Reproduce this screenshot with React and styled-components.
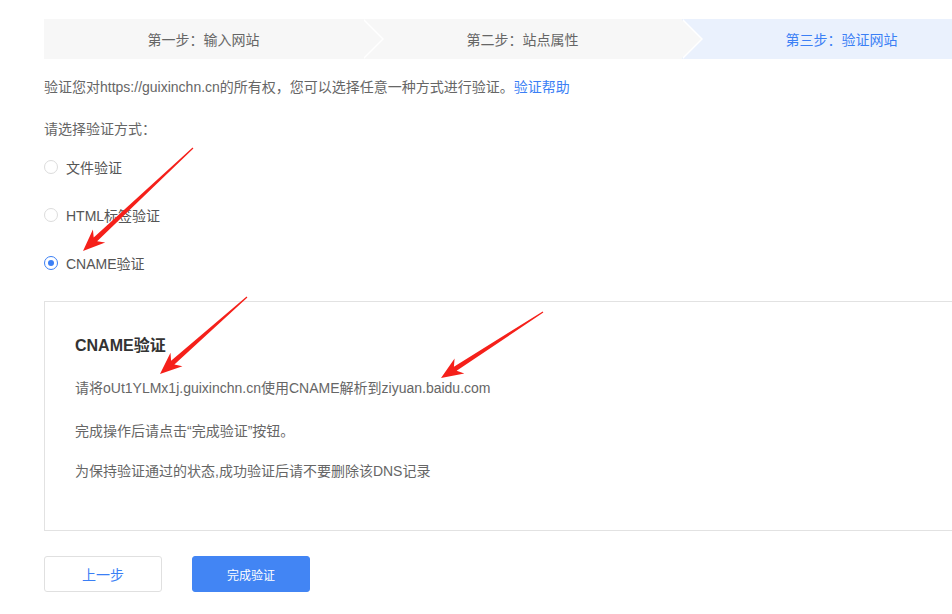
import React from 'react';
import styled, { createGlobalStyle } from 'styled-components';

const GlobalStyle = createGlobalStyle`
  html, body {
    margin: 0;
    padding: 0;
    background: #fff;
    overflow: hidden;
  }
  body {
    font-family: "Liberation Sans", "Noto Sans CJK SC", sans-serif;
    color: #666;
  }
`;

const Page = styled.div`
  position: relative;
  width: 1000px;
  padding: 19px 0 0 44px;
`;

const StepBar = styled.div`
  display: flex;
  height: 40px;
`;

const Step = styled.div`
  position: relative;
  flex: 0 0 319px;
  display: flex;
  align-items: center;
  justify-content: center;
  font-size: 14px;
  background: ${({ active }) => (active ? '#eaf1fd' : '#f7f7f7')};
  color: ${({ active }) => (active ? '#3b7ff5' : '#666')};
  z-index: ${({ layer }) => layer};

  ${({ last }) =>
    !last &&
    `
    &::before, &::after {
      content: '';
      position: absolute;
      top: 0;
      width: 0;
      height: 0;
      border-top: 20px solid transparent;
      border-bottom: 20px solid transparent;
    }
    &::before {
      right: -21px;
      border-left: 20px solid #fff;
    }
    &::after {
      right: -19px;
      border-left: 20px solid #f7f7f7;
    }
  `}
`;

const Intro = styled.p`
  margin: 18px 0 0;
  font-size: 14px;
  line-height: 20px;
`;

const HelpLink = styled.a`
  color: #3b7ff5;
  text-decoration: none;
`;

const Label = styled.p`
  margin: 22px 0 0;
  font-size: 14px;
  line-height: 20px;
`;

const RadioList = styled.div`
  display: flex;
  flex-direction: column;
  gap: 28px;
  margin-top: 18px;
`;

const RadioRow = styled.label`
  display: flex;
  align-items: center;
  gap: 8px;
  height: 20px;
  font-size: 14px;
  color: #555;
`;

const RadioDot = styled.span`
  box-sizing: border-box;
  width: 14px;
  height: 14px;
  border-radius: 50%;
  border: 1px solid ${({ checked }) => (checked ? '#3b7ff5' : '#dcdcdc')};
  display: flex;
  align-items: center;
  justify-content: center;

  &::after {
    content: '';
    width: 6px;
    height: 6px;
    border-radius: 50%;
    background: ${({ checked }) => (checked ? '#3b7ff5' : 'transparent')};
  }
`;

const InfoBox = styled.div`
  margin-top: 28px;
  width: 940px;
  border: 1px solid #e2e2e2;
  padding: 32px 30px 49px;
  box-sizing: border-box;
`;

const BoxTitle = styled.h3`
  margin: 0;
  font-size: 16px;
  line-height: 24px;
  font-weight: bold;
  color: #333;
`;

const BoxLine = styled.p`
  margin: ${({ gap }) => gap}px 0 0;
  font-size: 14px;
  line-height: 20px;
  color: #666;
`;

const Buttons = styled.div`
  display: flex;
  gap: 30px;
  margin-top: 25px;
`;

const Button = styled.button`
  box-sizing: border-box;
  width: 118px;
  height: 36px;
  border-radius: 3px;
  font-family: inherit;
  font-size: ${({ size }) => size}px;
  cursor: pointer;
  border: 1px solid ${({ primary }) => (primary ? '#4285f4' : '#e0e0e0')};
  background: ${({ primary }) => (primary ? '#4285f4' : '#fff')};
  color: ${({ primary }) => (primary ? '#fff' : '#3b7ff5')};
`;

const Overlay = styled.svg`
  position: absolute;
  left: 0;
  top: 0;
  width: 952px;
  height: 614px;
  pointer-events: none;
`;

const arrows = [
  { tail: [193, 148], tip: [83, 251] },
  { tail: [247, 297], tip: [160, 374] },
  { tail: [543, 312], tip: [441, 378] },
];

function arrowPoints({ tail, tip }) {
  const dx = tip[0] - tail[0];
  const dy = tip[1] - tail[1];
  const len = Math.hypot(dx, dy);
  const ux = dx / len;
  const uy = dy / len;
  const nx = -uy;
  const ny = ux;
  const headLen = 22;
  const headW = 9;
  const neckW = 2.5;
  const bx = tip[0] - ux * headLen;
  const by = tip[1] - uy * headLen;
  const nbx = tip[0] - ux * (headLen - 5);
  const nby = tip[1] - uy * (headLen - 5);
  const pts = [
    [tail[0] + nx * 0.6, tail[1] + ny * 0.6],
    [nbx + nx * neckW, nby + ny * neckW],
    [bx + nx * headW, by + ny * headW],
    tip,
    [bx - nx * headW, by - ny * headW],
    [nbx - nx * neckW, nby - ny * neckW],
    [tail[0] - nx * 0.6, tail[1] - ny * 0.6],
  ];
  return pts.map((p) => p.join(',')).join(' ');
}

const steps = ['第一步：输入网站', '第二步：站点属性', '第三步：验证网站'];

export default function App() {
  return (
    <>
      <GlobalStyle />
      <Page>
        <StepBar>
          {steps.map((s, i) => (
            <Step key={s} active={i === 2} last={i === 2} layer={3 - i}>
              {s}
            </Step>
          ))}
        </StepBar>

        <Intro>
          验证您对https://guixinchn.cn的所有权，您可以选择任意一种方式进行验证。
          <HelpLink href="#">验证帮助</HelpLink>
        </Intro>

        <Label>请选择验证方式：</Label>

        <RadioList>
          <RadioRow>
            <RadioDot />
            文件验证
          </RadioRow>
          <RadioRow>
            <RadioDot />
            HTML标签验证
          </RadioRow>
          <RadioRow>
            <RadioDot checked />
            CNAME验证
          </RadioRow>
        </RadioList>

        <InfoBox>
          <BoxTitle>CNAME验证</BoxTitle>
          <BoxLine gap={20}>请将oUt1YLMx1j.guixinchn.cn使用CNAME解析到ziyuan.baidu.com</BoxLine>
          <BoxLine gap={23}>完成操作后请点击“完成验证”按钮。</BoxLine>
          <BoxLine gap={20}>为保持验证通过的状态,成功验证后请不要删除该DNS记录</BoxLine>
        </InfoBox>

        <Buttons>
          <Button size={14}>上一步</Button>
          <Button primary size={12}>完成验证</Button>
        </Buttons>

        <Overlay viewBox="0 0 952 614">
          {arrows.map((a, i) => (
            <polygon key={i} points={arrowPoints(a)} fill="#f5201a" />
          ))}
        </Overlay>
      </Page>
    </>
  );
}
